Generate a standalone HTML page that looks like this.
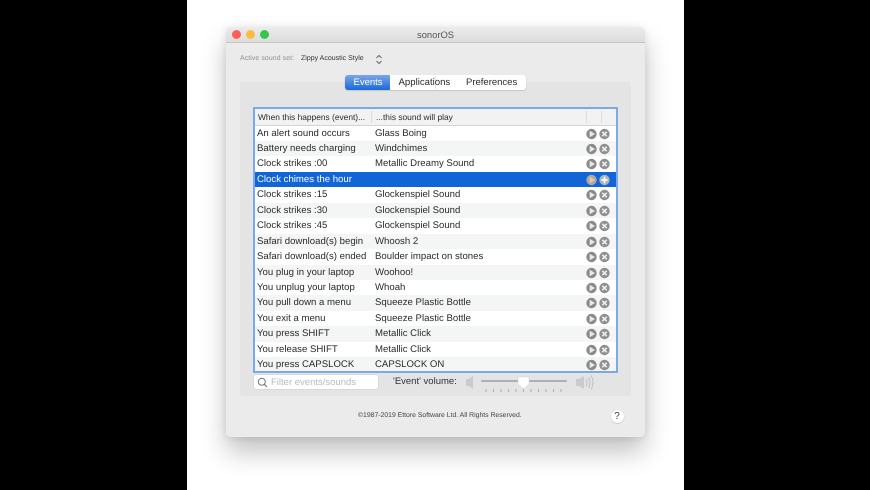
<!DOCTYPE html>
<html><head><meta charset="utf-8">
<style>
html,body{margin:0;padding:0;width:870px;height:490px;overflow:hidden;background:#000;font-family:"Liberation Sans",sans-serif;color:#2a2a2a;text-rendering:geometricPrecision}
#bg{position:absolute;left:187px;top:0;width:497px;height:490px;background:#fff;overflow:hidden}
#wrap{position:absolute;left:0;top:0;width:870px;height:490px;filter:blur(.35px)}
#shadow{position:absolute;left:226px;top:27px;width:419px;height:410px;border-radius:5px;box-shadow:0 15px 26px rgba(0,0,0,.24),0 1px 9px rgba(0,0,0,.1)}
#win{position:absolute;left:226px;top:27px;width:419px;height:410px;background:#ebebeb;border-radius:5px;overflow:hidden}
#tb{position:absolute;left:0;top:0;width:419px;height:15px;background:linear-gradient(#ebebeb,#dcdcdc);border-bottom:1px solid #c6c6c6}
.d{position:absolute;top:3px;width:9px;height:9px;border-radius:50%}
.t{position:absolute;white-space:nowrap}
#panel{position:absolute;left:240px;top:82px;width:391px;height:314px;background:#e4e4e4;border-radius:3px}
#tabs{position:absolute;left:345px;top:75px;width:181px;height:15px;background:#fff;border-radius:3px;box-shadow:0 .5px 1px rgba(0,0,0,.25)}
#tab1{position:absolute;left:0;top:0;width:45px;height:15px;background:linear-gradient(#7ba7e6,#1a69dc);border-radius:3px 0 0 3px}
#tbl{position:absolute;left:253px;top:107px;width:361px;height:262px;border:2px solid #7ba8ea;background:#fff;overflow:hidden}
.r{position:absolute;left:0;width:361px;height:15.45px}
.r.o{background:#f4f5f5}
.r.s{background:#1265d7;color:#fff}
.r span{position:absolute;top:1px;font-size:9.6px;line-height:13px;white-space:nowrap}
.a{left:2px}.b{left:120px}
.r svg{position:absolute;left:331px;top:2px}
#hd{position:absolute;left:0;top:0;width:361px;height:16px;background:#f2f2f2;border-bottom:1px solid #d4d4d4}
#hd span{position:absolute;top:2px;font-size:8.4px;line-height:12px;white-space:nowrap}
.v{position:absolute;top:2px;width:1px;height:12px;background:#dcdcdc}
#q{position:absolute;left:254px;top:375px;width:124px;height:14px;background:#fff;border-radius:2px;box-shadow:0 0 1px rgba(0,0,0,.3)}
</style></head>
<body>
<div id="bg"></div>
<svg width="0" height="0" style="position:absolute"><defs>
<symbol id="n" viewBox="0 0 27 12"><circle cx="5.500" cy="6" r="5.200" fill="#8a8a8a"/><path d="M3.700 2.800 9 6 3.700 9.200z" fill="#e9e9e9"/><circle cx="18.500" cy="6" r="5.200" fill="#909090"/><path d="M16.300 3.800l4.400 4.400M20.700 3.800l-4.400 4.400" stroke="#eee" stroke-width="1.600"/></symbol>
</defs></svg>
<div id="wrap">
<div id="shadow"></div>
<div id="win">
  <div id="tb"></div>
  <div class="d" style="left:6px;background:#fc5f57"></div>
  <div class="d" style="left:20px;background:#fdbc40"></div>
  <div class="d" style="left:34px;background:#34c84a"></div>
</div>
<div class="t" style="left:417px;top:28.500px;font-size:9.400px;line-height:12px;color:#555">sonorOS</div>
<div class="t" style="left:240px;top:54px;font-size:6.900px;line-height:10px;color:#8f8f8f;letter-spacing:.1px">Active sound set:</div>
<div class="t" style="left:301px;top:54px;font-size:7px;line-height:10px;color:#333">Zippy Acoustic Style</div>
<svg style="position:absolute;left:375px;top:53.500px" width="8" height="11" viewBox="0 0 8 11"><path d="M1.500 4 4 1.500 6.500 4M1.500 7 4 9.500 6.500 7" fill="none" stroke="#666" stroke-width="1"/></svg>
<div id="panel"></div>
<div id="tabs"><div id="tab1"></div>
  <div style="position:absolute;left:90px;top:1px;width:1px;height:13px;background:#e4e4e4"></div>
  <div class="t" style="left:8.500px;top:1.500px;font-size:9.500px;line-height:12px;color:#fff">Events</div>
  <div class="t" style="left:53.500px;top:1.500px;font-size:9.600px;line-height:12px;color:#2a2a2a">Applications</div>
  <div class="t" style="left:121px;top:1.500px;font-size:9.500px;line-height:12px;color:#2a2a2a">Preferences</div>
</div>
<div id="tbl">
  <div id="hd"><span style="left:3px">When this happens (event)...</span><span style="left:121px">...this sound will play</span>
    <div class="v" style="left:116px"></div><div class="v" style="left:331px"></div><div class="v" style="left:346px"></div></div>
<div class="r" style="top:16.5px"><span class="a">An alert sound occurs</span><span class="b">Glass Boing</span><svg width="27" height="12"><use href="#n"/></svg></div>
<div class="r o" style="top:31.95px"><span class="a">Battery needs charging</span><span class="b">Windchimes</span><svg width="27" height="12"><use href="#n"/></svg></div>
<div class="r" style="top:47.4px"><span class="a">Clock strikes :00</span><span class="b">Metallic Dreamy Sound</span><svg width="27" height="12"><use href="#n"/></svg></div>
<div class="r s" style="top:62.85px"><span class="a">Clock chimes the hour</span><svg width="27" height="12" viewBox="0 0 27 12"><circle cx="5.500" cy="6" r="5.200" fill="#a9aaa8"/><path d="M3.700 2.800 9 6 3.700 9.200z" fill="#efc98a"/><circle cx="18.500" cy="6" r="5.200" fill="#aeb3bc"/><path d="M18.500 2.800v6.400M15.300 6h6.400" stroke="#fff" stroke-width="1.600"/></svg></div>
<div class="r" style="top:78.3px"><span class="a">Clock strikes :15</span><span class="b">Glockenspiel Sound</span><svg width="27" height="12"><use href="#n"/></svg></div>
<div class="r o" style="top:93.75px"><span class="a">Clock strikes :30</span><span class="b">Glockenspiel Sound</span><svg width="27" height="12"><use href="#n"/></svg></div>
<div class="r" style="top:109.2px"><span class="a">Clock strikes :45</span><span class="b">Glockenspiel Sound</span><svg width="27" height="12"><use href="#n"/></svg></div>
<div class="r o" style="top:124.65px"><span class="a">Safari download(s) begin</span><span class="b">Whoosh 2</span><svg width="27" height="12"><use href="#n"/></svg></div>
<div class="r" style="top:140.1px"><span class="a">Safari download(s) ended</span><span class="b">Boulder impact on stones</span><svg width="27" height="12"><use href="#n"/></svg></div>
<div class="r o" style="top:155.55px"><span class="a">You plug in your laptop</span><span class="b">Woohoo!</span><svg width="27" height="12"><use href="#n"/></svg></div>
<div class="r" style="top:171px"><span class="a">You unplug your laptop</span><span class="b">Whoah</span><svg width="27" height="12"><use href="#n"/></svg></div>
<div class="r o" style="top:186.45px"><span class="a">You pull down a menu</span><span class="b">Squeeze Plastic Bottle</span><svg width="27" height="12"><use href="#n"/></svg></div>
<div class="r" style="top:201.9px"><span class="a">You exit a menu</span><span class="b">Squeeze Plastic Bottle</span><svg width="27" height="12"><use href="#n"/></svg></div>
<div class="r o" style="top:217.35px"><span class="a">You press SHIFT</span><span class="b">Metallic Click</span><svg width="27" height="12"><use href="#n"/></svg></div>
<div class="r" style="top:232.8px"><span class="a">You release SHIFT</span><span class="b">Metallic Click</span><svg width="27" height="12"><use href="#n"/></svg></div>
<div class="r o" style="top:248.25px"><span class="a">You press CAPSLOCK</span><span class="b">CAPSLOCK ON</span><svg width="27" height="12"><use href="#n"/></svg></div>
</div>
<div id="q">
  <svg style="position:absolute;left:3px;top:2px" width="11" height="11" viewBox="0 0 11 11"><circle cx="4.800" cy="4.800" r="3.500" fill="none" stroke="#777" stroke-width="1"/><path d="M7.300 7.300 10 10" stroke="#777" stroke-width="1.200"/></svg>
  <div class="t" style="left:17px;top:1.500px;font-size:9.500px;line-height:12px;color:#bbb">Filter events/sounds</div>
</div>
<div class="t" style="left:393px;top:376px;font-size:9.500px;line-height:12px;color:#333">'Event' volume:</div>
<svg style="position:absolute;left:462px;top:372px" width="140" height="22" viewBox="0 0 140 22">
  <path d="M4 7h3l4-3v13l-4-3H4z" fill="#cbcbcb"/>
  <rect x="19" y="8" width="86" height="2" rx="1" fill="#b0b0b0"/>
  <path d="M56 5h11v7l-5.500 5-5.500-5z" fill="#fff" stroke="#d0d0d0" stroke-width=".5"/>
  <path d="M24 17v3M31.500 17v3M39 17v3M46.500 17v3M54 17v3M61.500 17v3M69 17v3M76.500 17v3M84 17v3M91.500 17v3M99 17v3" stroke="#a0a0a0" stroke-width=".8"/>
  <path d="M114 7h3l5-3v13l-5-3h-3z" fill="#cbcbcb"/>
  <path d="M124 7q2 3.500 0 7M126.500 5q3 5.500 0 11M129 3.500q4 7 0 14" fill="none" stroke="#c0c0c0" stroke-width="1"/>
</svg>
<div class="t" style="left:358px;top:411px;font-size:6.850px;line-height:10px;color:#444">©1987-2019 Ettore Software Ltd. All Rights Reserved.</div>
<div style="position:absolute;left:610.500px;top:409.500px;width:13px;height:13px;border-radius:50%;background:#fff;box-shadow:0 .5px 1px rgba(0,0,0,.25);font-size:10px;line-height:13px;text-align:center;color:#444">?</div>
</div>
</body></html>
